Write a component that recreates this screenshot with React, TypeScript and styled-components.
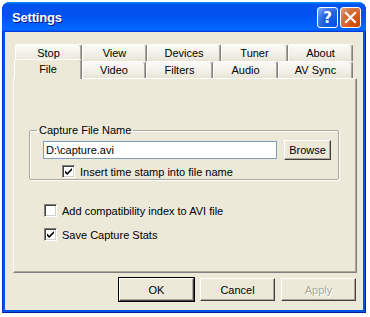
import styled, { createGlobalStyle } from "styled-components"

const GlobalStyle = createGlobalStyle`
  body{
    margin:0;
    background:#fff;
    font-family:"Liberation Sans", Arial, sans-serif;
    font-size:11px;
    color:#000;
  }
`

const row1 = [
  { label: 'Stop', w: 67 },
  { label: 'View', w: 65 },
  { label: 'Devices', w: 74 },
  { label: 'Tuner', w: 67 },
  { label: 'About', w: 65 },
]
const row2 = [
  { label: 'File', w: 68 },
  { label: 'Video', w: 64 },
  { label: 'Filters', w: 67 },
  { label: 'Audio', w: 65 },
  { label: 'AV Sync', w: 75 },
]

const Check = ({ checked }: { checked: boolean }) => (
  <Box>
    {checked && <svg width="9" height="9" viewBox="0 0 9 9">
      <path d="M1 3.5 L3.2 5.7 L8 1 L8 3.2 L3.2 8 L1 5.8 Z" fill="#000" />
    </svg>}
  </Box>
)

const App = () => {
  return <>
    <GlobalStyle />
    <Page>
      <Window>
        <TitleBar>
          <Title>Settings</Title>
          <Controls>
            <CtrlButton kind="help">?</CtrlButton>
            <CtrlButton kind="close">
              <svg width="13" height="13" viewBox="0 0 13 13">
                <path d="M2 2 L11 11 M11 2 L2 11" stroke="#fff" strokeWidth="2.2" strokeLinecap="square" />
              </svg>
            </CtrlButton>
          </Controls>
        </TitleBar>
        <Frame>
          <Body>
            <Tabs>
              <TabRow indent={2}>
                {row1.map(t => <Tab key={t.label} w={t.w}>{t.label}</Tab>)}
              </TabRow>
              <TabRow indent={1}>
                {row2.map((t, i) => <Tab key={t.label} w={t.w} active={i === 0}>{t.label}</Tab>)}
              </TabRow>
            </Tabs>
            <Panel>
              <Group>
                <Legend>Capture File Name</Legend>
                <FileRow>
                  <TextInput>D:\capture.avi</TextInput>
                  <Button w={47} h={20}>Browse</Button>
                </FileRow>
                <CheckRow indent={19}>
                  <Check checked />
                  <span>Insert time stamp into file name</span>
                </CheckRow>
              </Group>
              <Options>
                <CheckRow indent={0}>
                  <Check checked={false} />
                  <span>Add compatibility index to AVI file</span>
                </CheckRow>
                <CheckRow indent={0}>
                  <Check checked />
                  <span>Save Capture Stats</span>
                </CheckRow>
              </Options>
            </Panel>
            <Footer>
              <Button w={75} h={23} primary>OK</Button>
              <Button w={75} h={23}>Cancel</Button>
              <Button w={75} h={23} disabled>Apply</Button>
            </Footer>
          </Body>
        </Frame>
      </Window>
    </Page>
  </>
}

const Page = styled.div`
  padding:2px 4px 4px 2px;
`

const Window = styled.div`
  width:364px;
  height:311px;
  display:flex;
  flex-direction:column;
  border-radius:8px 8px 0 0;
  overflow:hidden;
  background:#0054e3;
  box-shadow: inset 1px 0 #0831d9, inset -1px -1px #001ea0;
`

const TitleBar = styled.div`
  height:30px;
  flex:none;
  display:flex;
  align-items:center;
  justify-content:space-between;
  padding:1px 5px 0 10px;
  box-sizing:border-box;
  background:linear-gradient(180deg, #0997ff, #0053ee 8%, #0050ee 40%, #0066ff 88%, #0066ff 93%, #005bff 95%, #003dd7 96%, #003dd7);
`

const Title = styled.div`
  color:#fff;
  font-weight:bold;
  font-size:13px;
  letter-spacing:-0.2px;
  text-shadow:1px 1px #0f1089;
`

const Controls = styled.div`
  display:flex;
  gap:2px;
`

const CtrlButton = styled.div<{ kind: 'help' | 'close' }>`
  width:21px;
  height:21px;
  box-sizing:border-box;
  border:1px solid #fff;
  border-radius:3px;
  display:flex;
  align-items:center;
  justify-content:center;
  color:#fff;
  font-family:"DejaVu Sans", sans-serif;
  font-weight:bold;
  font-size:15px;
  background:${p => p.kind === 'close'
    ? 'radial-gradient(circle at 90% 90%, #cc4600 0%, #dc6527 55%, #cd7546 70%, #e5a88c 100%)'
    : 'radial-gradient(circle at 90% 90%, #0054e9 0%, #2263d5 55%, #4477ee 70%, #8fb2f5 100%)'};
`

const Frame = styled.div`
  flex:1;
  display:flex;
  padding:0 3px 3px;
`

const Body = styled.div`
  flex:1;
  background:#ece9d8;
  display:flex;
  flex-direction:column;
  padding:12px 6px 0 8px;
`

const Tabs = styled.div`
  display:flex;
  flex-direction:column;
  height:34px;
  position:relative;
  z-index:1;
`

const TabRow = styled.div<{ indent: number }>`
  display:flex;
  height:17px;
  align-items:flex-end;
  padding-left:${p => p.indent}px;
`

const Tab = styled.div<{ w: number, active?: boolean }>`
  width:${p => p.w}px;
  height:${p => p.active ? 20 : 17}px;
  margin-bottom:${p => p.active ? -1 : 0}px;
  box-sizing:border-box;
  display:flex;
  align-items:center;
  justify-content:center;
  padding-bottom:${p => p.active ? 2 : 0}px;
  border-top:1px solid #fff;
  border-left:1px solid #fff;
  border-right:1px solid #808080;
  border-radius:3px 3px 0 0;
  box-shadow: inset -1px 0 #aca899;
  background:${p => p.active ? '#ece9d8' : 'linear-gradient(#fbfaf6, #efede3 70%, #e7e4d5)'};
`

const Panel = styled.div`
  height:195px;
  box-sizing:border-box;
  border-top:1px solid #fff;
  border-left:1px solid #fff;
  border-right:1px solid #808080;
  border-bottom:1px solid #808080;
  box-shadow: inset -1px -1px #aca899;
  padding:46px 17px 0 15px;
  display:flex;
  flex-direction:column;
`

const Group = styled.fieldset`
  margin:0;
  height:55px;
  box-sizing:border-box;
  border:1px solid #aca899;
  box-shadow: inset 1px 1px #fff, 1px 1px #fff;
  border-radius:2px;
  padding:4px 7px 0 13px;
  display:flex;
  flex-direction:column;
  gap:5px;
`

const Legend = styled.legend`
  padding:0 2px;
  margin-left:-6px;
  line-height:11px;
`

const FileRow = styled.div`
  display:flex;
  align-items:center;
  gap:7px;
`

const TextInput = styled.div`
  width:234px;
  height:18px;
  box-sizing:border-box;
  border:1px solid #7f9db9;
  background:#fff;
  padding:0 2px;
  line-height:16px;
`

const Button = styled.div<{ w: number, h: number, primary?: boolean, disabled?: boolean }>`
  width:${p => p.w}px;
  height:${p => p.h}px;
  box-sizing:border-box;
  display:flex;
  align-items:center;
  justify-content:center;
  background:#ece9d8;
  color:${p => p.disabled ? '#aca899' : '#000'};
  text-shadow:${p => p.disabled ? '1px 1px #fff' : 'none'};
  border:1px solid;
  border-color:#fff #404040 #404040 #fff;
  box-shadow: inset -1px -1px #aca899;
  ${p => p.primary && `
    outline:1px solid #000;
    outline-offset:0;
  `}
`

const CheckRow = styled.div<{ indent: number }>`
  display:flex;
  align-items:center;
  gap:5px;
  padding-left:${p => p.indent}px;
  height:13px;
`

const Box = styled.div`
  width:13px;
  height:13px;
  box-sizing:border-box;
  border:1px solid;
  border-color:#808080 #fff #fff #808080;
  box-shadow: inset 1px 1px #404040, inset -1px -1px #d4d0c8;
  background:#fff;
  display:flex;
  align-items:center;
  justify-content:center;
  flex:none;
`

const Options = styled.div`
  display:flex;
  flex-direction:column;
  gap:11px;
  margin-top:24px;
  padding-left:15px;
`

const Footer = styled.div`
  display:flex;
  justify-content:flex-end;
  gap:6px;
  margin-top:5px;
  padding-right:1px;
`

export default App
